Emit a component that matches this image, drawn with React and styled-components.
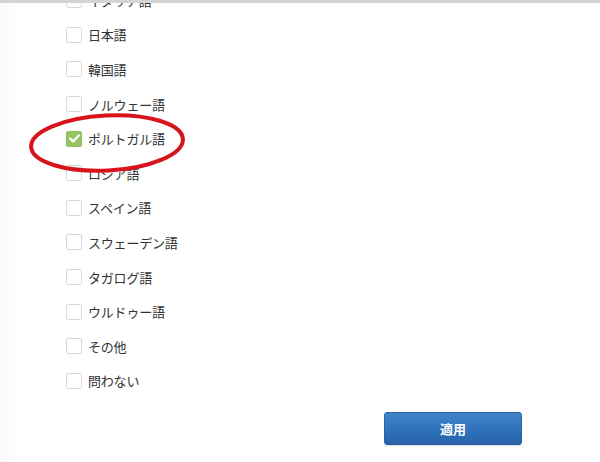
import React from "react";
import styled, { createGlobalStyle } from "styled-components";

const GlobalStyle = createGlobalStyle`
  html, body {
    margin: 0;
    padding: 0;
    background: #ffffff;
  }
  body {
    font-family: "Noto Sans CJK JP", "Noto Sans", sans-serif;
  }
`;

const Frame = styled.div`
  position: relative;
  width: 600px;
  height: 462px;
  box-sizing: border-box;
  overflow: hidden;
  border-top: 3px solid #d4d4d4;
  background: linear-gradient(to right, #f9f9f9 0px, #ffffff 18px);
`;

const List = styled.ul`
  list-style: none;
  margin: -20px 0 0 0;
  padding: 0 0 0 66px;
  display: flex;
  flex-direction: column;
`;

const Row = styled.li`
  height: 34.6px;
  display: flex;
  align-items: center;
  gap: 6px;
  font-size: 13px;
  color: #333333;
  letter-spacing: -0.2px;
`;

const Box = styled.span`
  width: 16px;
  height: 16px;
  box-sizing: border-box;
  border-radius: 2px;
  flex-shrink: 0;
  display: flex;
  align-items: center;
  justify-content: center;
  border: 1px solid ${({ checked }) => (checked ? "#8cc15a" : "#d9d9d9")};
  background: ${({ checked }) => (checked ? "#93c665" : "#ffffff")};
`;

const Footer = styled.div`
  display: flex;
  justify-content: flex-end;
  padding: 14px 78px 0 0;
`;

const ApplyButton = styled.button`
  width: 138px;
  height: 33px;
  border: 1px solid #2a62a3;
  border-radius: 3px;
  background: linear-gradient(to bottom, #3d84cd 0%, #2f72bb 55%, #2863a8 100%);
  color: #ffffff;
  font-family: "Noto Sans CJK JP", sans-serif;
  font-size: 13px;
  font-weight: 700;
  box-shadow: 0 1px 1px rgba(0, 0, 0, 0.15);
`;

const Ring = styled.svg`
  position: absolute;
  left: 24px;
  top: 104px;
  pointer-events: none;
`;

const languages = [
  "イタリア語",
  "日本語",
  "韓国語",
  "ノルウェー語",
  "ポルトガル語",
  "ロシア語",
  "スペイン語",
  "スウェーデン語",
  "タガログ語",
  "ウルドゥー語",
  "その他",
  "問わない",
];

const Check = () => (
  <svg width="11" height="9" viewBox="0 0 11 9">
    <path d="M1.2 4.6 L4.2 7.4 L9.8 1.4" fill="none" stroke="#ffffff" strokeWidth="2.2" strokeLinecap="round" strokeLinejoin="round" />
  </svg>
);

export default function App() {
  return (
    <>
      <GlobalStyle />
      <Frame>
        <List>
          {languages.map((name) => {
            const checked = name === "ポルトガル語";
            return (
              <Row key={name}>
                <Box checked={checked}>{checked && <Check />}</Box>
                {name}
              </Row>
            );
          })}
        </List>
        <Footer>
          <ApplyButton>適用</ApplyButton>
        </Footer>
        <Ring width="166" height="72" viewBox="0 0 166 72">
          <ellipse cx="83" cy="36" rx="76" ry="27.5" fill="none" stroke="#d7141c" strokeWidth="4" transform="rotate(-3 83 36)" />
        </Ring>
      </Frame>
    </>
  );
}
